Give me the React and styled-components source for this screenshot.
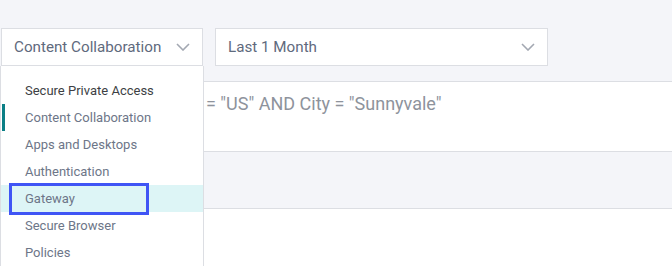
import React from "react";
import styled, { createGlobalStyle } from "styled-components";

const GlobalStyle = createGlobalStyle`
  body {
    margin: 0;
    font-family: Roboto, "Liberation Sans", sans-serif;
    background: #f4f5f9;
  }
`;

const products = [
  "Content Collaboration",
  "Apps and Desktops",
  "Authentication",
  "Gateway",
  "Secure Browser",
  "Policies",
];

const Chevron = () => (
  <svg width="14" height="8" viewBox="0 0 14 8" fill="none">
    <path d="M1 1l6 6 6-6" stroke="#a3a8b2" strokeWidth="1.6" />
  </svg>
);

const App = () => {
  return (
    <Page>
      <GlobalStyle />
      <Toolbar>
        <Select width={202}>
          <SelectLabel>Content Collaboration</SelectLabel>
          <Chevron />
          <Menu>
            <MenuHeader>Secure Private Access</MenuHeader>
            {products.map((name) => (
              <MenuItem
                key={name}
                active={name === "Content Collaboration"}
                hovered={name === "Gateway"}
              >
                {name}
                {name === "Gateway" && <FocusRing />}
              </MenuItem>
            ))}
          </Menu>
        </Select>
        <Select width={333}>
          <SelectLabel>Last 1 Month</SelectLabel>
          <Chevron />
        </Select>
      </Toolbar>
      <FilterPanel>
        <FilterText>Country = "US" AND City = "Sunnyvale"</FilterText>
      </FilterPanel>
      <Spacer />
      <Body />
    </Page>
  );
};

export default App;

const Page = styled.div`
  height: 266px;
  overflow: hidden;
  background: #f4f5f9;
`;

const Toolbar = styled.div`
  display: flex;
  gap: 12px;
  padding: 28px 0 0 1px;
`;

const Select = styled.div`
  position: relative;
  box-sizing: border-box;
  width: ${(props) => props.width}px;
  height: 38px;
  display: flex;
  align-items: center;
  justify-content: space-between;
  padding: 0 12px 0 12px;
  background: #fff;
  border: 1px solid #dcdee3;
`;

const SelectLabel = styled.span`
  font-size: 15.2px;
  color: #5f6a7d;
`;

const Menu = styled.div`
  position: absolute;
  top: 37px;
  left: -2px;
  width: 204px;
  box-sizing: border-box;
  height: 240px;
  padding-top: 11px;
  background: #fff;
  border: 1px solid #dcdee3;
  border-top: none;
  z-index: 2;
`;

const MenuHeader = styled.div`
  height: 27px;
  line-height: 27px;
  padding-left: 24px;
  font-size: 13px;
  color: #3d3f44;
`;

const MenuItem = styled.div`
  position: relative;
  height: 27px;
  line-height: 27px;
  padding-left: 24px;
  font-size: 13px;
  color: #6d7688;
  background: ${(props) => (props.hovered ? "#ddf5f6" : "transparent")};
  &::before {
    content: "";
    display: ${(props) => (props.active ? "block" : "none")};
    position: absolute;
    left: 1px;
    top: 0;
    width: 3px;
    height: 27px;
    background: #0b7f86;
  }
`;

const FocusRing = styled.span`
  position: absolute;
  left: 8px;
  top: -2px;
  width: 140px;
  height: 32px;
  box-sizing: border-box;
  border: 3px solid #3f55f5;
`;

const FilterPanel = styled.div`
  margin-top: 15px;
  height: 58px;
  background: #fff;
  border-top: 1px solid #dcdee3;
  border-bottom: 1px solid #dcdee3;
  padding: 11px 0 0 139px;
`;

const FilterText = styled.div`
  font-size: 18px;
  line-height: 21px;
  color: #8e939c;
`;

const Spacer = styled.div`
  height: 56px;
  border-bottom: 1px solid #dcdee3;
`;

const Body = styled.div`
  height: 60px;
  background: #fff;
`;
